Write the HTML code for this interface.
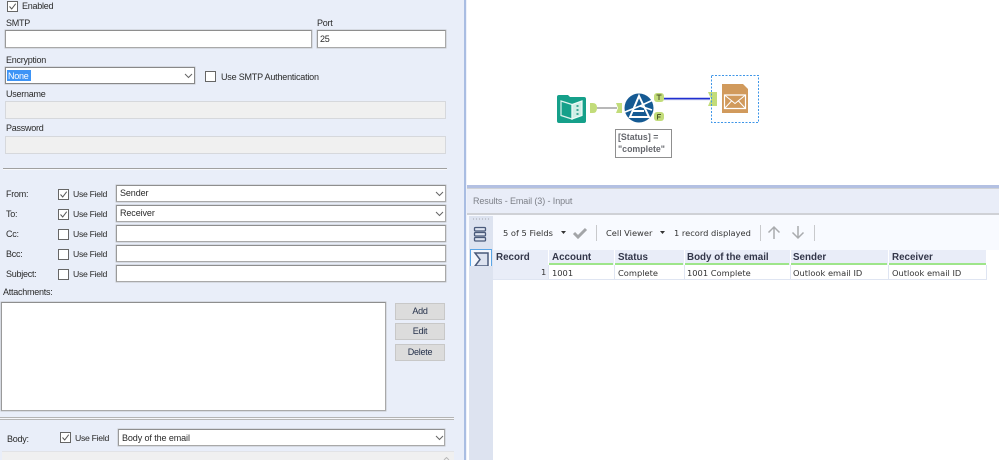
<!DOCTYPE html>
<html><head><meta charset="utf-8">
<style>
html,body{margin:0;padding:0;background:#fff}
#p{position:relative;width:999px;height:460px;overflow:hidden;background:#fff;font-family:"Liberation Sans",sans-serif;font-size:9px;letter-spacing:-.25px;color:#2a2a2a}
#p div,#p svg{position:absolute}
.t{white-space:nowrap;line-height:12px;height:12px}
.u{letter-spacing:-.3px;font-size:8.7px}
.w{letter-spacing:-.1px}
.i{box-sizing:border-box;background:#fff;border:1px solid #a9a9a9;border-top-color:#8e8e8e;border-left-color:#9a9a9a;box-shadow:0 0 0 .5px #c4c6cc}
.d{box-sizing:border-box;background:#f0f0f0;border:1px solid #d6d8dc}
.c{box-sizing:border-box;width:11px;height:11px;background:#fff;border:1px solid #666}
.b{box-sizing:border-box;background:#dcdcdc;border:1px solid #c8c8c8;text-align:center;line-height:15px;color:#24304a;font-size:9px}
.r{font-family:"DejaVu Sans",sans-serif;font-size:8.3px;letter-spacing:0;color:#333}
.h{font-weight:bold;color:#33374a;font-family:"Liberation Sans",sans-serif;font-size:9.8px;letter-spacing:0}
.hc{background:#e9edf8;height:15px;top:250px}
.g{height:2px;background:#9ee58a;top:263px}
</style></head><body>
<div id="p">
<div style="left:0;top:0;width:464px;height:460px;background:#e9eef9"></div>
<div style="left:464px;top:0;width:2px;height:460px;background:#a9bde2"></div>
<div style="left:466px;top:0;width:1px;height:460px;background:#eef1fa"></div>

<div class="c" style="left:7px;top:1px"></div>
<svg style="left:7px;top:1px" width="11" height="11"><path d="M2.500 5.500L4.700 8L8.700 2.700" fill="none" stroke="#555" stroke-width="1"/></svg>
<div class="t" style="left:22px;top:0px">Enabled</div>

<div class="t" style="left:6px;top:17px">SMTP</div>
<div class="i" style="left:5px;top:30px;width:307px;height:18px"></div>
<div class="t" style="left:317px;top:17px">Port</div>
<div class="i" style="left:317px;top:30px;width:129px;height:18px"></div>
<div class="t" style="left:320px;top:33px">25</div>

<div class="t" style="left:6px;top:54px">Encryption</div>
<div class="i" style="left:5px;top:67px;width:190px;height:17px;border-color:#888"></div>
<div style="left:7px;top:70px;width:24px;height:11px;background:#3d94f6"></div>
<div class="t" style="left:8px;top:70px;color:#fff">None</div>
<svg style="left:184px;top:72px" width="10" height="8"><path d="M1 2L4.500 5.500L8 2" fill="none" stroke="#666"/></svg>
<div class="c" style="left:205px;top:71px"></div>
<div class="t" style="left:221px;top:71px;letter-spacing:-.2px">Use SMTP Authentication</div>

<div class="t" style="left:6px;top:88px">Username</div>
<div class="d" style="left:5px;top:101px;width:441px;height:18px"></div>
<div class="t" style="left:6px;top:122px">Password</div>
<div class="d" style="left:5px;top:136px;width:441px;height:18px"></div>
<div style="left:3px;top:168px;width:444px;height:1px;background:#a0a0a0"></div>
<div style="left:3px;top:169px;width:444px;height:1px;background:#f8f9fc"></div>

<div class="t" style="left:6px;top:188px">From:</div>
<div class="c" style="left:58px;top:189px"></div>
<svg style="left:58px;top:189px" width="11" height="11"><path d="M2.500 5.500L4.700 8L8.700 2.700" fill="none" stroke="#555" stroke-width="1"/></svg>
<div class="t u" style="left:73px;top:188px">Use Field</div>
<div class="i" style="left:116px;top:185px;width:330px;height:17px"></div>
<div class="t w" style="left:120px;top:187px">Sender</div>
<svg style="left:435px;top:190px" width="10" height="8"><path d="M1 2L4.500 5.500L8 2" fill="none" stroke="#666"/></svg>

<div class="t" style="left:6px;top:208px">To:</div>
<div class="c" style="left:58px;top:209px"></div>
<svg style="left:58px;top:209px" width="11" height="11"><path d="M2.500 5.500L4.700 8L8.700 2.700" fill="none" stroke="#555" stroke-width="1"/></svg>
<div class="t u" style="left:73px;top:208px">Use Field</div>
<div class="i" style="left:116px;top:205px;width:330px;height:17px"></div>
<div class="t w" style="left:120px;top:207px">Receiver</div>
<svg style="left:435px;top:210px" width="10" height="8"><path d="M1 2L4.500 5.500L8 2" fill="none" stroke="#666"/></svg>

<div class="t" style="left:6px;top:228px">Cc:</div>
<div class="c" style="left:58px;top:229px"></div>
<div class="t u" style="left:73px;top:228px">Use Field</div>
<div class="i" style="left:116px;top:225px;width:330px;height:17px"></div>

<div class="t" style="left:6px;top:248px">Bcc:</div>
<div class="c" style="left:58px;top:249px"></div>
<div class="t u" style="left:73px;top:248px">Use Field</div>
<div class="i" style="left:116px;top:245px;width:330px;height:17px"></div>

<div class="t" style="left:6px;top:268px">Subject:</div>
<div class="c" style="left:58px;top:269px"></div>
<div class="t u" style="left:73px;top:268px">Use Field</div>
<div class="i" style="left:116px;top:265px;width:330px;height:17px"></div>

<div class="t" style="left:3px;top:286px">Attachments:</div>
<div class="i" style="left:1px;top:302px;width:385px;height:109px"></div>
<div class="b" style="left:395px;top:303px;width:50px;height:17px">Add</div>
<div class="b" style="left:395px;top:323px;width:50px;height:17px">Edit</div>
<div class="b" style="left:395px;top:344px;width:50px;height:17px">Delete</div>

<div style="left:0;top:417px;width:454px;height:1px;background:#b4b4b4"></div>
<div style="left:0;top:418px;width:454px;height:1px;background:#f6f7fb"></div>
<div style="left:0;top:419px;width:454px;height:1px;background:#b4b4b4"></div>

<div class="t" style="left:7px;top:433px">Body:</div>
<div class="c" style="left:60px;top:432px"></div>
<svg style="left:60px;top:432px" width="11" height="11"><path d="M2.500 5.500L4.700 8L8.700 2.700" fill="none" stroke="#555" stroke-width="1"/></svg>
<div class="t u" style="left:75px;top:432px">Use Field</div>
<div class="i" style="left:118px;top:429px;width:327px;height:17px"></div>
<div class="t w" style="left:122px;top:432px">Body of the email</div>
<svg style="left:435px;top:434px" width="10" height="8"><path d="M1 2L4.500 5.500L8 2" fill="none" stroke="#666"/></svg>
<div style="left:2px;top:451px;width:452px;height:9px;background:#f0f0f0;border-top:1px solid #e2e3e6"></div>
<svg style="left:442px;top:457px" width="9" height="3"><path d="M2 3L4.500 .5L7 3" fill="none" stroke="#b8b8b8"/></svg>

<!-- canvas -->
<svg style="left:540px;top:65px" width="240" height="100">
<path d="M19 30H28L30 32H44Q46 32 46 34V56Q46 58 44 58H19Q17 58 17 56V32Q17 30 19 30Z" fill="#15a08a"/>
<path d="M21 36L32 39.500V54L21 50.500Z" fill="#15a08a" stroke="#dff3ee" stroke-width="1.200"/>
<path d="M42 36L32 39.500V54L42 50.500Z" fill="#cfeee6" stroke="#eefaf7" stroke-width="1.200"/>
<path d="M36.500 41h2M36.500 45h2M36.500 49h2" stroke="#15907c" stroke-width="1.500"/>
<path d="M50 38H53Q57 38 57 43T53 48H50Z" fill="#c2dc7a"/>
<path d="M57 43H77" stroke="#a0a0a0" stroke-width="1.500"/>
<path d="M76 38H82V48H76L78 43Z" fill="#c2dc7a"/>
<circle cx="99" cy="43" r="14.500" fill="#155a93"/>
<path d="M99 31L90 52H109Z" fill="none" stroke="#fff" stroke-width="2"/>
<path d="M85 47L100 41M100 41L113 35M100 41L112 45" stroke="#fff" stroke-width="1.700"/>
<rect x="93" y="45" width="11" height="2" fill="#fff"/>
<rect x="114" y="28" width="10" height="9" rx="3" fill="#c2dc7a"/>
<rect x="114" y="47" width="10" height="9" rx="3" fill="#c2dc7a"/>
<path d="M116.500 30H121.500M119 30V35" stroke="#4a5528" stroke-width="1"/>
<path d="M117.500 49.500V54.500M117.500 49.500H121M117.500 52H120.500" stroke="#4a5528" stroke-width="1" fill="none"/>
<path d="M124 33.500H170" stroke="#1f2fd0" stroke-width="1.500"/>
<path d="M124 34.800H170" stroke="#9095d8" stroke-width=".7"/>
<path d="M168 27H177V41H168L171 34Z" fill="#c2dc7a"/>
<rect x="171.500" y="10.500" width="47" height="47" fill="none" stroke="#3e96e8" stroke-width="1" stroke-dasharray="2 1.500"/>
<path d="M182 19H203L208 24V48H182Z" fill="#d19a5c"/>
<path d="M184.500 30H205.500V43.500H184.500Z" fill="none" stroke="#fff" stroke-width="1.200"/>
<path d="M184.500 30L195 38.500L205.500 30M184.500 43.500L191.500 36M205.500 43.500L198.500 36" fill="none" stroke="#fff" stroke-width="1"/>
</svg>
<div style="left:615px;top:129px;width:57px;height:29px;box-sizing:border-box;background:#fff;border:1px solid #8f8f8f"></div>
<div class="t" style="left:618px;top:131px;font-size:8.800px;letter-spacing:0;font-weight:bold;color:#66686e">[Status] =</div>
<div class="t" style="left:618px;top:143px;font-size:8.800px;letter-spacing:0;font-weight:bold;color:#66686e">"complete"</div>

<!-- results -->
<div style="left:467px;top:185px;width:532px;height:3px;background:#b3c0e2"></div>
<div style="left:467px;top:188px;width:532px;height:27px;background:#e9edf8;border-top:1px solid #cfd2d6;border-bottom:2px solid #cfd1d6;box-sizing:border-box"></div>
<div class="t" style="left:473px;top:195px;color:#7d8088;font-size:9px;letter-spacing:-.1px">Results - Email (3) - Input</div>
<div style="left:467px;top:215px;width:532px;height:35px;background:#f8faff"></div>
<div style="left:469px;top:216px;width:24px;height:244px;background:#dde3f0"></div>
<svg style="left:470px;top:216px" width="23" height="50">
<path d="M3 3H19" stroke="#a8aab0" stroke-dasharray="1 2"/>
<g fill="none" stroke="#4a5a7a" stroke-width="1.300"><rect x="4.500" y="11.500" width="11" height="3.500" rx="1"/><rect x="4.500" y="16.500" width="11" height="3.500" rx="1"/><rect x="4.500" y="21.500" width="11" height="3.500" rx="1"/></g>
<rect x="0" y="33" width="22" height="21" fill="#f4f7fd"/>
<rect x=".5" y="33.500" width="21" height="20" fill="none" stroke="#5aa5e6"/>
<path d="M5 37H18V50H5L10 43.500Z" fill="#dde3f0" stroke="#4a5a7a" stroke-width="1.500"/>
</svg>

<div class="t r" style="left:503px;top:227px">5 of 5 Fields</div>
<svg style="left:560px;top:230px" width="7" height="5"><path d="M1 1H6L3.500 4Z" fill="#333"/></svg>
<svg style="left:572px;top:226px" width="16" height="14"><path d="M2 7L6 11L14 3" fill="none" stroke="#a3a5a8" stroke-width="3"/></svg>
<div style="left:596px;top:225px;width:1px;height:16px;background:#c8c9cc"></div>
<div class="t r" style="left:606px;top:227px">Cell Viewer</div>
<svg style="left:659px;top:230px" width="7" height="5"><path d="M1 1H6L3.500 4Z" fill="#333"/></svg>
<div class="t r" style="left:674px;top:227px">1 record displayed</div>
<div style="left:760px;top:225px;width:1px;height:16px;background:#c8c9cc"></div>
<svg style="left:767px;top:225px" width="14" height="15"><path d="M7 14V2M1.500 7.500L7 2L12.500 7.500" fill="none" stroke="#a9abae" stroke-width="1.500"/></svg>
<svg style="left:791px;top:225px" width="14" height="15"><path d="M7 1V13M1.500 7.500L7 13L12.500 7.500" fill="none" stroke="#a9abae" stroke-width="1.500"/></svg>
<div style="left:814px;top:225px;width:1px;height:16px;background:#c8c9cc"></div>

<div style="left:493px;top:250px;width:494px;height:30px;background:#fff"></div>
<div class="hc" style="left:493px;width:55px;height:29px"></div>
<div class="hc" style="left:549px;width:65px"></div>
<div class="hc" style="left:615px;width:69px"></div>
<div class="hc" style="left:685px;width:105px"></div>
<div class="hc" style="left:791px;width:97px"></div>
<div class="hc" style="left:889px;width:97px"></div>
<div class="g" style="left:549px;width:64px"></div>
<div class="g" style="left:615px;width:68px"></div>
<div class="g" style="left:685px;width:104px"></div>
<div class="g" style="left:791px;width:96px"></div>
<div class="g" style="left:889px;width:97px"></div>
<div style="left:493px;top:279px;width:494px;height:1px;background:#dfe5f2"></div>
<div style="left:548px;top:265px;width:1px;height:15px;background:#dfe5f2"></div>
<div style="left:614px;top:265px;width:1px;height:15px;background:#dfe5f2"></div>
<div style="left:684px;top:265px;width:1px;height:15px;background:#dfe5f2"></div>
<div style="left:790px;top:265px;width:1px;height:15px;background:#dfe5f2"></div>
<div style="left:888px;top:265px;width:1px;height:15px;background:#dfe5f2"></div>
<div style="left:986px;top:265px;width:1px;height:15px;background:#dfe5f2"></div>

<div class="t h" style="left:496px;top:252px">Record</div>
<div class="t h" style="left:552px;top:252px">Account</div>
<div class="t h" style="left:618px;top:252px">Status</div>
<div class="t h" style="left:687px;top:252px">Body of the email</div>
<div class="t h" style="left:793px;top:252px">Sender</div>
<div class="t h" style="left:892px;top:252px">Receiver</div>

<div class="t r" style="left:541px;top:266px">1</div>
<div class="t r" style="left:552px;top:267px">1001</div>
<div class="t r" style="left:618px;top:267px">Complete</div>
<div class="t r" style="left:687px;top:267px">1001 Complete</div>
<div class="t r" style="left:793px;top:267px">Outlook email ID</div>
<div class="t r" style="left:892px;top:267px">Outlook email ID</div>
</div>
</body></html>
